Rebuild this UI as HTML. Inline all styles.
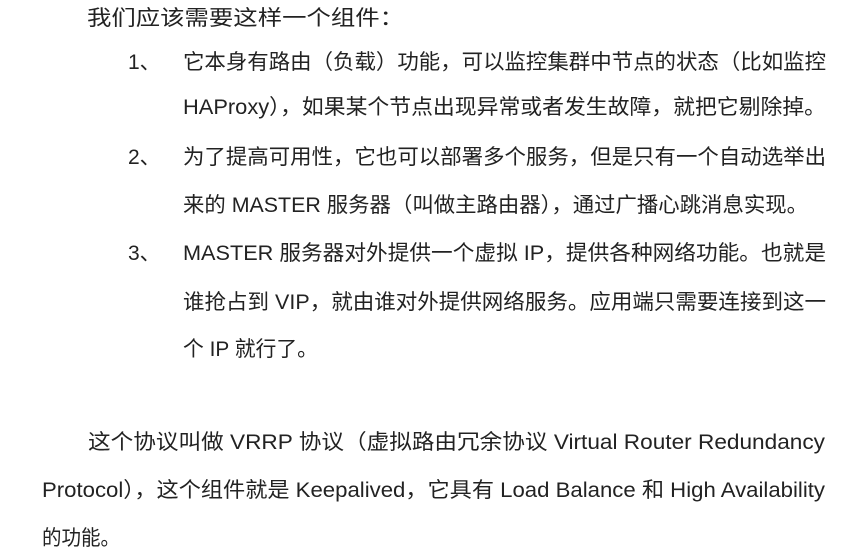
<!DOCTYPE html>
<html><head><meta charset="utf-8"><style>
html,body{margin:0;padding:0;background:#fff;width:845px;height:556px;overflow:hidden}
svg{display:block}
text{font-family:"Liberation Sans","Noto Sans CJK SC",sans-serif;font-size:21px;fill:#222}
</style></head><body>
<svg width="845" height="556" xmlns="http://www.w3.org/2000/svg">
<text x="87" y="25" textLength="317" lengthAdjust="spacingAndGlyphs">我们应该需要这样一个组件：</text>
<text x="128" y="69">1、</text>
<text x="183" y="69" textLength="643" lengthAdjust="spacingAndGlyphs">它本身有路由（负载）功能，可以监控集群中节点的状态（比如监控</text>
<text x="183" y="114" textLength="643" lengthAdjust="spacingAndGlyphs">HAProxy），如果某个节点出现异常或者发生故障，就把它剔除掉。</text>
<text x="128" y="164">2、</text>
<text x="183" y="164" textLength="643" lengthAdjust="spacingAndGlyphs">为了提高可用性，它也可以部署多个服务，但是只有一个自动选举出</text>
<text x="183" y="212" textLength="625" lengthAdjust="spacingAndGlyphs">来的 MASTER 服务器（叫做主路由器），通过广播心跳消息实现。</text>
<text x="128" y="260">3、</text>
<text x="183" y="260" textLength="643" lengthAdjust="spacingAndGlyphs">MASTER 服务器对外提供一个虚拟 IP，提供各种网络功能。也就是</text>
<text x="183" y="309" textLength="643" lengthAdjust="spacingAndGlyphs">谁抢占到 VIP，就由谁对外提供网络服务。应用端只需要连接到这一</text>
<text x="183" y="356" textLength="135" lengthAdjust="spacingAndGlyphs">个 IP 就行了。</text>
<text x="88" y="449" textLength="737" lengthAdjust="spacingAndGlyphs">这个协议叫做 VRRP 协议（虚拟路由冗余协议 Virtual Router Redundancy</text>
<text x="42" y="497" textLength="783" lengthAdjust="spacingAndGlyphs">Protocol），这个组件就是 Keepalived，它具有 Load Balance 和 High Availability</text>
<text x="42" y="545" textLength="78" lengthAdjust="spacingAndGlyphs">的功能。</text>
</svg>
</body></html>
